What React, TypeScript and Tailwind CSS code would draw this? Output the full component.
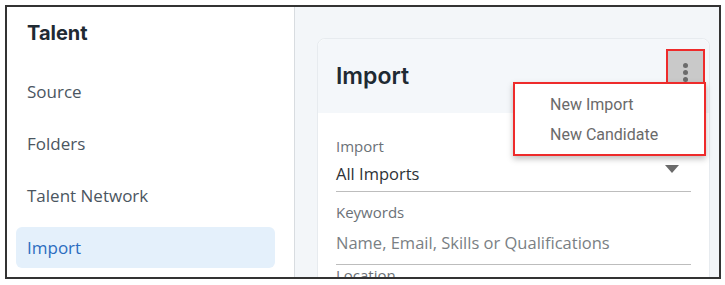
import React from "react";

export default function App() {
  const items = ["Source", "Folders", "Talent Network"];
  return (
    <div className="w-[725px] h-[285px] bg-white pt-[5px] pl-[5px]">
      <div className="w-[716px] h-[274px] border-2 border-[#333333] flex overflow-hidden">
        {/* Sidebar */}
        <div
          className="w-[288px] shrink-0 h-full bg-white border-r border-[#d8dce0] pl-[9px]"
          style={{ fontFamily: '"Open Sans", sans-serif' }}
        >
          <div
            className="h-[52px] flex items-center pl-[11px] text-[20px] font-bold text-[#1f2a33]"
            style={{ fontFamily: "Inter, sans-serif" }}
          >
            Talent
          </div>
          <div className="mt-[12px] flex flex-col gap-[11px] w-[259px]">
            {items.map((t) => (
              <div
                key={t}
                className="h-[41px] flex items-center px-[11px] text-[17px] text-[#4b5661]"
              >
                {t}
              </div>
            ))}
            <div className="h-[41px] flex items-center px-[11px] text-[17px] text-[#2b6cbf] bg-[#e4f0fb] rounded-md">
              Import
            </div>
          </div>
        </div>
        {/* Content */}
        <div className="flex-1 h-full bg-[#f3f6f9] pt-[31px] pl-[22px] pr-[9px]">
          <div className="relative h-[260px] bg-white border border-[#e7ebef] rounded-lg">
            <div className="h-[74px] bg-[#f4f7fa] rounded-t-lg flex items-start justify-between pl-[18px] pr-[4px]">
              <div
                className="h-[74px] flex items-center text-[23px] font-semibold text-[#1f2a33]"
                style={{ fontFamily: "Inter, sans-serif" }}
              >
                Import
              </div>
              <div className="mt-[10px] w-[39px] h-[37px] border-2 border-[#ee2b2b] bg-[#c9c9c9] flex flex-col items-center pt-[12px] gap-[2px]">
                <span className="w-[5px] h-[5px] rounded-full bg-[#6b6b6b]" />
                <span className="w-[5px] h-[5px] rounded-full bg-[#6b6b6b]" />
                <span className="w-[5px] h-[5px] rounded-full bg-[#6b6b6b]" />
              </div>
            </div>
            <div
              className="pl-[18px] pr-[18px] pt-[23px]"
              style={{ fontFamily: '"Open Sans", sans-serif' }}
            >
              <div className="text-[15px] leading-[20px] text-[#6b7177]">Import</div>
              <div className="h-[36px] flex items-center justify-between border-b border-[#bdbdbd] pt-[2px]">
                <span className="text-[16.5px] text-[#2d3236]">All Imports</span>
                <svg width="14" height="8" viewBox="0 0 14 8" className="mr-[12px] mb-[12px]">
                  <path d="M0 0 L14 0 L7 8 Z" fill="#6a6a6a" />
                </svg>
              </div>
              <div className="mt-[10px] text-[15px] leading-[20px] text-[#6b7177]">Keywords</div>
              <div className="h-[43px] flex items-center border-b border-[#bdbdbd] pt-[1px]">
                <span className="text-[16.5px] text-[#7a7f84]">Name, Email, Skills or Qualifications</span>
              </div>
              <div className="mt-[0px] text-[15px] leading-[20px] text-[#6b7177]">Location</div>
            </div>
            {/* Dropdown menu */}
            <div
              className="absolute left-[195px] top-[43px] w-[193px] h-[74px] bg-white border-2 border-[#ee2b2b] shadow-[0_3px_6px_rgba(0,0,0,0.25)] flex flex-col justify-center gap-[8px] pl-[35px] pt-[2px]"
              style={{ fontFamily: "Roboto, sans-serif" }}
            >
              <div className="text-[16px] leading-[22px] text-[#6a6a6a]">New Import</div>
              <div className="text-[16px] leading-[22px] text-[#6a6a6a]">New Candidate</div>
            </div>
          </div>
        </div>
      </div>
    </div>
  );
}
